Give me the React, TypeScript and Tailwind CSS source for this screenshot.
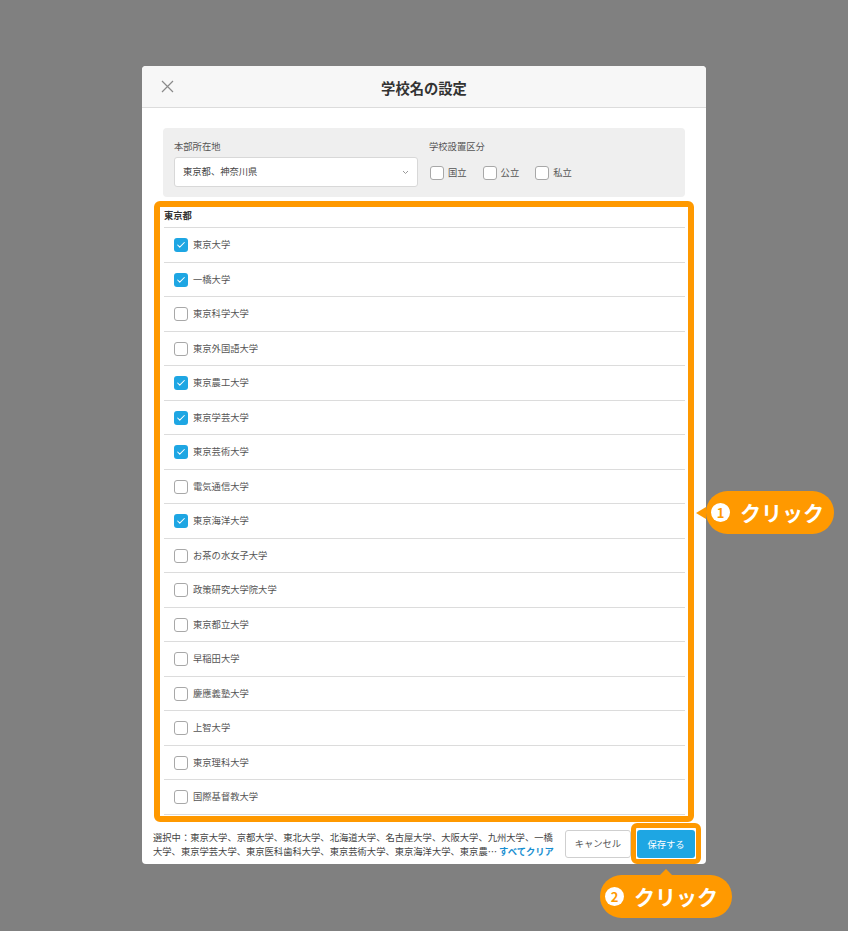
import { Check } from 'lucide-react'

const FONT = { fontFamily: '"Noto Sans CJK JP", "Noto Sans", sans-serif' }

const schools: { name: string; checked: boolean }[] = [
  { name: '東京大学', checked: true },
  { name: '一橋大学', checked: true },
  { name: '東京科学大学', checked: false },
  { name: '東京外国語大学', checked: false },
  { name: '東京農工大学', checked: true },
  { name: '東京学芸大学', checked: true },
  { name: '東京芸術大学', checked: true },
  { name: '電気通信大学', checked: false },
  { name: '東京海洋大学', checked: true },
  { name: 'お茶の水女子大学', checked: false },
  { name: '政策研究大学院大学', checked: false },
  { name: '東京都立大学', checked: false },
  { name: '早稲田大学', checked: false },
  { name: '慶應義塾大学', checked: false },
  { name: '上智大学', checked: false },
  { name: '東京理科大学', checked: false },
  { name: '国際基督教大学', checked: false },
]

function Box({ checked }: { checked: boolean }) {
  if (checked) {
    return (
      <span className="flex h-[14px] w-[14px] shrink-0 items-center justify-center rounded-[3px] bg-[#1ea6e3]">
        <Check className="h-[10px] w-[10px] text-white" strokeWidth={2.5} />
      </span>
    )
  }
  return <span className="h-[14px] w-[14px] shrink-0 rounded-[3px] border border-[#a8a8a8] bg-white" />
}

// orange "click" callout bubble
function Callout({ num }: { num: number }) {
  return (
    <div className="flex h-[43px] items-center whitespace-nowrap rounded-full bg-[#ff9900] pl-[5px] pr-[9px]">
      <span className="flex h-[19px] w-[19px] shrink-0 items-center justify-center rounded-full bg-white text-[13px] font-bold leading-none text-[#ff9900]">
        {num}
      </span>
      <span className="ml-[10px] shrink-0 text-[21px] font-bold leading-none text-white">クリック</span>
    </div>
  )
}

export default function App() {
  return (
    <div className="min-h-[931px] bg-[#808080] pt-[66px]" style={FONT}>
      <div className="relative mx-auto flex h-[798px] w-[564px] flex-col rounded-[4px] bg-white">
        {/* header */}
        <div className="relative flex h-[42px] shrink-0 items-center justify-center rounded-t-[4px] border-b border-[#dcdcdc] bg-[#f7f7f7]">
          <svg className="absolute left-[19px] top-[14px]" width="13" height="13" viewBox="0 0 13 13">
            <path d="M1 1 L12 12 M12 1 L1 12" stroke="#8a8a8a" strokeWidth="1.2" fill="none" />
          </svg>
          <h2 className="pt-[2px] text-[14.3px] font-bold text-[#333]">学校名の設定</h2>
        </div>

        {/* body */}
        <div className="flex-1 px-[21px] pt-[20px]">
          <div className="flex gap-[11px] rounded-[4px] bg-[#efefef] px-[11px] pb-[10px] pt-[11px]">
            <div className="w-[244px]">
              <div className="text-[9.3px] leading-[14px] text-[#555]">本部所在地</div>
              <div className="mt-[4px] flex h-[30px] items-center justify-between rounded-[3px] border border-[#d8d8d8] bg-white pl-[8px] pr-[8px]">
                <span className="text-[9.3px] text-[#444]">東京都、神奈川県</span>
                <svg width="7" height="5" viewBox="0 0 7 5">
                  <path d="M1 1 L3.5 3.5 L6 1" stroke="#999" strokeWidth="1" fill="none" />
                </svg>
              </div>
            </div>
            <div>
              <div className="text-[9.3px] leading-[14px] text-[#555]">学校設置区分</div>
              <div className="mt-[4px] flex h-[30px] items-center gap-[16px] pl-[1px] pt-[2px]">
                {['国立', '公立', '私立'].map((t) => (
                  <label key={t} className="flex items-center gap-[4px]">
                    <Box checked={false} />
                    <span className="text-[9.3px] text-[#555]">{t}</span>
                  </label>
                ))}
              </div>
            </div>
          </div>

          {/* school list */}
          <div className="relative mt-[10px] pl-[1px]">
            <div className="flex h-[21px] items-center border-b border-[#dcdcdc] pb-[3px] text-[9.3px] font-bold text-[#333]">
              東京都
            </div>
            {schools.map((s) => (
              <div key={s.name} className="flex h-[34.5px] items-center gap-[5px] border-b border-[#dcdcdc] pl-[10px] pt-[1px]">
                <Box checked={s.checked} />
                <span className="text-[9.3px] text-[#555]">{s.name}</span>
              </div>
            ))}
            <div className="pointer-events-none absolute -bottom-[7px] -left-[9px] -right-[9px] -top-[6px] rounded-[6px] border-[6px] border-[#ff9900]" />
          </div>
        </div>

        {/* footer */}
        <div className="flex h-[42px] shrink-0 items-center gap-[11px] pl-[11px] pr-[11px] pt-[1px]">
          <div className="flex-1 text-[9.3px] leading-[14px] text-[#444]">
            <div className="whitespace-nowrap">選択中：東京大学、京都大学、東北大学、北海道大学、名古屋大学、大阪大学、九州大学、一橋</div>
            <div className="whitespace-nowrap">
              大学、東京学芸大学、東京医科歯科大学、東京芸術大学、東京海洋大学、東京農… <span className="font-bold text-[#1a8fd1]">すべてクリア</span>
            </div>
          </div>
          <button className="h-[28px] w-[67px] rounded-[3px] border border-[#cfcfcf] bg-white text-[9.3px] text-[#555]">キャンセル</button>
          <div className="relative ml-[-5px]">
            <button className="h-[28px] w-[58px] rounded-[3px] bg-[#1ea6e3] text-[9.3px] text-white">保存する</button>
            <div className="pointer-events-none absolute -inset-[6px] rounded-[6px] border-[5px] border-[#ff9900]" />
          </div>
        </div>

        {/* callout 1 */}
        <div className="absolute left-[554px] top-[425px] flex items-center">
          <span className="h-0 w-0 border-y-[6px] border-r-[10px] border-y-transparent border-r-[#ff9900]" />
          <div className="w-[128px]">
            <Callout num={1} />
          </div>
        </div>

        {/* callout 2 */}
        <div className="absolute left-[458px] top-[803px] flex w-[132px] flex-col items-center">
          <span className="h-0 w-0 border-x-[6px] border-b-[6px] border-x-transparent border-b-[#ff9900]" />
          <div className="w-full">
            <Callout num={2} />
          </div>
        </div>
      </div>
    </div>
  )
}
